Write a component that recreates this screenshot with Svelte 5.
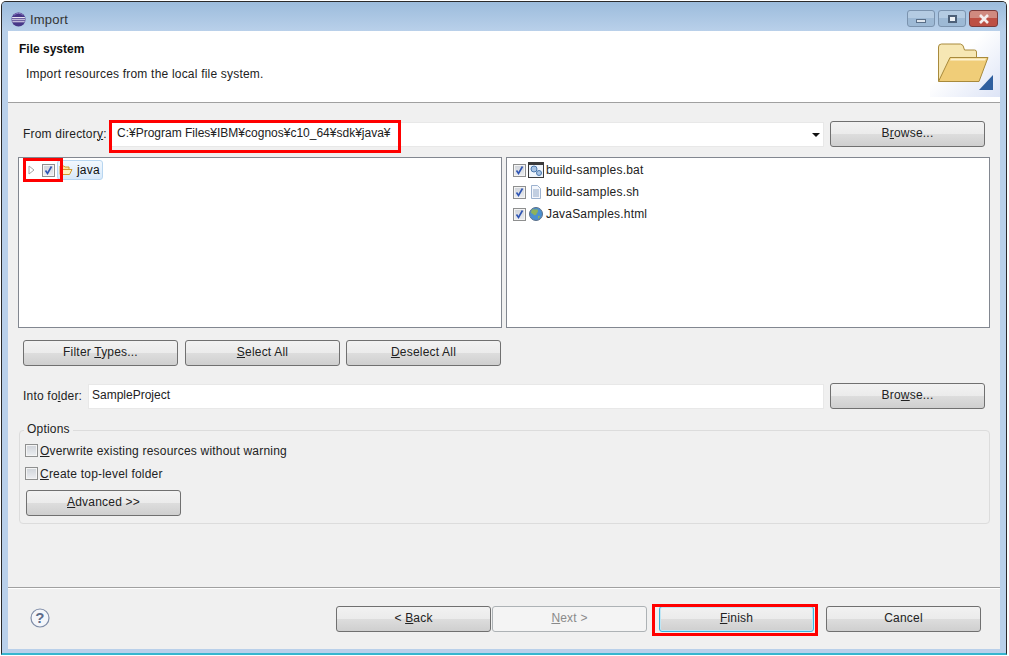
<script>
	const files = [
		{ name: 'build-samples.bat', icon: 'bat' },
		{ name: 'build-samples.sh', icon: 'doc' },
		{ name: 'JavaSamples.html', icon: 'web' }
	];
</script>

<main class="window">
	<div class="titlebar">
		<svg class="eclipse" width="15" height="15" viewBox="0 0 16 16">
			<circle cx="8" cy="8" r="7.5" fill="#473788" />
			<path d="M1.2 6h13.6M0.8 8.2h14.4M1.4 10.4h13.2" stroke="#e8e4f2" stroke-width="1.1" />
			<path d="M3 3.5a7 7 0 0 1 10 0" stroke="#8f7fc4" fill="none" />
		</svg>
		<span class="wintitle">Import</span>
		<div class="controls">
			<div class="ctl"><span class="min"></span></div>
			<div class="ctl"><span class="max"></span></div>
			<div class="ctl close">
				<svg width="14" height="10" viewBox="0 0 14 10">
					<path d="M3 1l8 8M11 1l-8 8" stroke="#f4eeee" stroke-width="2.6" />
				</svg>
			</div>
		</div>
	</div>

	<div class="content">
		<header class="banner">
			<div class="banner-text">
				<h1>File system</h1>
				<p>Import resources from the local file system.</p>
			</div>
			<div class="banner-art">
				<svg width="70" height="66" viewBox="0 0 70 66">
					<path d="M8.5 50V16q0-3 3-3h19q3 0 4 6h10q2 0 2 2v6z" fill="#f6e7b4" stroke="#a88a3c" />
					<path d="M8.5 50.5L20 26.5h38L49 50.5z" fill="#f0cd78" stroke="#a88a3c" />
					<path d="M21 27.5h35l-1 2H20z" fill="#fcf2d0" />
					<path d="M63 44v15H49z" fill="#2f5f9f" />
				</svg>
			</div>
		</header>

		<section class="main">
			<div class="row">
				<label class="lbl" for="dir">From director<u>y</u>:</label>
				<div class="field combo" id="dir">
					<span>C:¥Program Files¥IBM¥cognos¥c10_64¥sdk¥java¥</span>
					<span class="arrow"></span>
					<span class="mark dirmark"></span>
				</div>
				<button class="btn">B<u>r</u>owse...</button>
			</div>

			<div class="panes">
				<div class="pane">
					<div class="treerow">
						<svg class="twisty" width="7" height="10" viewBox="0 0 7 10"><path d="M1 1l5 4-5 4z" fill="#fff" stroke="#a6a6a6" /></svg>
						<span class="check on">
							<svg width="11" height="11" viewBox="0 0 11 11"><path d="M2.5 5.5l2 3 4-7" stroke="#2f55b4" stroke-width="1.6" fill="none" /></svg>
						</span>
						<span class="treeitem">
							<svg width="14" height="12" viewBox="0 0 14 12">
								<path d="M1 10V2h4l1 1h4v2" fill="#fbe3a0" stroke="#d39a2c" />
								<path d="M1 10.5L3.5 5.5h9.5L10.5 10.5z" fill="#fff3c4" stroke="#d39a2c" />
							</svg>
							java
						</span>
						<span class="mark treemark"></span>
					</div>
				</div>
				<div class="pane files">
					{#each files as f}
						<div class="filerow">
							<span class="check on">
								<svg width="11" height="11" viewBox="0 0 11 11"><path d="M2.5 5.5l2 3 4-7" stroke="#2f55b4" stroke-width="1.6" fill="none" /></svg>
							</span>
							{#if f.icon === 'bat'}
								<svg class="ficon" width="16" height="16" viewBox="0 0 16 16">
									<rect x="0.5" y="0.5" width="15" height="15" fill="#eef4fb" stroke="#3a3a3a" />
									<rect x="1" y="1" width="14" height="2" fill="#3a3a3a" />
									<circle cx="6" cy="7" r="3" fill="#a9c4e4" stroke="#4a78ad" />
									<circle cx="11" cy="11" r="2.5" fill="#a9c4e4" stroke="#4a78ad" />
								</svg>
							{:else if f.icon === 'doc'}
								<svg class="ficon" width="16" height="16" viewBox="0 0 16 16">
									<path d="M3.5 1.5h6l3 3v10h-9z" fill="#f4f7fc" stroke="#9db2cf" />
									<path d="M5 6h6M5 8h6M5 10h6M5 12h6" stroke="#8fa6c6" />
								</svg>
							{:else}
								<svg class="ficon" width="16" height="16" viewBox="0 0 16 16">
									<circle cx="8" cy="8" r="6.5" fill="#4b8fd0" stroke="#5a6f88" />
									<path d="M5 3q3 1 4 0 2 2 0 4-1 3-3 2-2-2-3-2 0-3 2-4z" fill="#8db25a" />
									<path d="M10 10q2-1 2 1l-2 2z" fill="#8db25a" />
								</svg>
							{/if}
							<span>{f.name}</span>
						</div>
					{/each}
				</div>
			</div>

			<div class="selbtns">
				<button class="btn">Filter <u>T</u>ypes...</button>
				<button class="btn"><u>S</u>elect All</button>
				<button class="btn"><u>D</u>eselect All</button>
			</div>

			<div class="row into">
				<label class="lbl" for="into">Into fo<u>l</u>der:</label>
				<div class="field" id="into">SampleProject</div>
				<button class="btn">Bro<u>w</u>se...</button>
			</div>

			<div class="options">
				<span class="legend">Options</span>
				<div class="opt"><span class="check"></span><span><u>O</u>verwrite existing resources without warning</span></div>
				<div class="opt"><span class="check"></span><span><u>C</u>reate top-level folder</span></div>
				<button class="btn adv"><u>A</u>dvanced &gt;&gt;</button>
			</div>
		</section>

		<footer class="footer">
			<svg class="help" width="20" height="20" viewBox="0 0 20 20">
				<circle cx="10" cy="10" r="9" fill="#f4f6fa" stroke="#7f8da8" stroke-width="1.2" />
				<text x="10" y="15" text-anchor="middle" class="qm">?</text>
			</svg>
			<div class="navbtns">
				<button class="btn">&lt; <u>B</u>ack</button>
				<button class="btn disabled"><u>N</u>ext &gt;</button>
				<button class="btn default"><u>F</u>inish<span class="mark finmark"></span></button>
				<button class="btn">Cancel</button>
			</div>
		</footer>
	</div>
</main>

<style>
	:global(body) {
		background: #fff;
	}
	* {
		box-sizing: border-box;
	}
	.window {
		width: 1006px;
		height: 654px;
		margin: 1px 0 0 1px;
		background: #b9d0ea;
		border: 1px solid #2a2a2a;
		border-bottom: 2px solid #35b6cf;
		border-radius: 5px 5px 0 0;
		font-family: 'Liberation Sans', Arial, sans-serif;
		font-size: 12px;
		letter-spacing: 0.2px;
		color: #222;
		display: flex;
		flex-direction: column;
	}
	.titlebar {
		height: 29px;
		flex: none;
		display: flex;
		align-items: center;
		padding: 6px 0 0 9px;
		background: linear-gradient(#9cbcdc, #b9d0ea);
		border-radius: 4px 4px 0 0;
	}
	.wintitle {
		margin-left: 4px;
		font-size: 13px;
		color: #333;
	}
	.controls {
		margin-left: auto;
		margin-right: 8px;
		margin-top: -2px;
		display: flex;
		gap: 3px;
	}
	.ctl {
		width: 28px;
		height: 17px;
		border: 1px solid #7b93ae;
		border-radius: 3px;
		background: linear-gradient(#b4cbe2 50%, #9db9d5 50%);
		display: flex;
		align-items: center;
		justify-content: center;
	}
	.ctl.close {
		width: 29px;
		border-color: #7a3a3a;
		background: linear-gradient(#d08a80 50%, #bd4f43 50%);
	}
	.min {
		width: 10px;
		height: 4px;
		margin-top: 5px;
		background: #dfe6ee;
		border: 1px solid #5a6f88;
	}
	.max {
		width: 9px;
		height: 8px;
		background: #eef2f6;
		border: 2px solid #4d6078;
	}
	.content {
		margin: 0 6px;
		height: 618px;
		background: #f0f0f0;
		display: flex;
		flex-direction: column;
	}
	.banner {
		height: 72px;
		flex: none;
		display: flex;
		background: #fff;
		border-bottom: 1px solid #a0a0a0;
	}
	.banner-text {
		padding: 11px 0 0 11px;
	}
	h1 {
		margin: 0;
		font-size: 12px;
		line-height: 15px;
		font-weight: bold;
		letter-spacing: 0;
		color: #111;
	}
	p {
		margin: 10px 0 0 7px;
		line-height: 15px;
	}
	.banner-art {
		margin-left: auto;
		width: 70px;
		height: 66px;
		background: linear-gradient(135deg, #fff 40%, #dde4f6);
	}
	.banner-art svg {
		display: block;
	}
	.main {
		padding-top: 18px;
	}
	.row {
		display: flex;
		align-items: center;
		height: 26px;
		padding: 0 15px;
	}
	.lbl {
		flex: none;
		width: 86px;
		padding-bottom: 1px;
		white-space: nowrap;
	}
	.field {
		position: relative;
		flex: 1;
		height: 25px;
		margin-right: 6px;
		padding: 0 0 2px 7px;
		background: #fff;
		border: 1px solid #e8e8e8;
		display: flex;
		align-items: center;
		letter-spacing: 0;
	}
	.arrow {
		position: absolute;
		right: 3px;
		top: 10px;
		border: 4px solid transparent;
		border-top: 4px solid #111;
	}
	.mark {
		position: absolute;
		border: 3px solid #f00;
		pointer-events: none;
	}
	.dirmark {
		left: -1px;
		top: -3px;
		width: 292px;
		height: 33px;
	}
	.btn {
		position: relative;
		flex: none;
		width: 155px;
		height: 26px;
		padding: 0 0 2px;
		font: inherit;
		letter-spacing: inherit;
		color: #222;
		border: 1px solid #707070;
		border-radius: 3px;
		background: linear-gradient(#f2f2f2, #ebebeb 50%, #dddddd 50%, #cfcfcf);
	}
	.btn.disabled {
		color: #8a8a8a;
		border-color: #adb2b5;
		background: #f4f4f4;
	}
	.btn.default {
		border-color: #3cb4dc;
		box-shadow: inset 0 0 0 1px #bfe6f5;
	}
	.panes {
		display: grid;
		grid-template-columns: 1fr 1fr;
		gap: 4px;
		margin: 10px 10px 0;
		height: 171px;
	}
	.pane {
		background: #fff;
		border: 1px solid #828790;
	}
	.treerow {
		position: relative;
		display: flex;
		align-items: center;
		height: 20px;
		margin-top: 2px;
		padding-left: 9px;
	}
	.twisty {
		margin-right: 7px;
		flex: none;
	}
	.check {
		flex: none;
		width: 13px;
		height: 13px;
		display: inline-flex;
		align-items: center;
		justify-content: center;
		border: 1px solid #8e8f8f;
		background: linear-gradient(#cfd3d9, #eceef1);
		box-shadow: inset 0 0 0 1px #f4f4f4;
	}
	.treeitem {
		display: flex;
		align-items: center;
		gap: 4px;
		height: 20px;
		padding: 0 2px 1px 1px;
		margin-left: 2px;
		border: 1px solid #b8d6f0;
		border-radius: 3px;
		background: linear-gradient(#f2f8fe, #d8e9fa);
		color: #111;
	}
	.treemark {
		left: 4px;
		top: -2px;
		width: 40px;
		height: 24px;
	}
	.files {
		padding: 1px 0 0 6px;
	}
	.filerow {
		display: flex;
		align-items: center;
		height: 22px;
	}
	.ficon {
		flex: none;
		margin: 0 2px 0 2px;
	}
	.filerow span:last-child {
		padding-bottom: 1px;
	}
	.selbtns {
		display: flex;
		gap: 6px;
		margin: 12px 0 0 15px;
	}
	.selbtns .btn:nth-child(2) {
		margin-left: 1px;
	}
	.into {
		margin-top: 17px;
	}
	.into .lbl {
		width: 65px;
	}
	.into .field {
		padding-left: 3px;
	}
	.options {
		position: relative;
		margin: 21px 10px 0 11px;
		padding: 8px 7px 0 5px;
		height: 94px;
		border: 1px solid #dcdcdc;
		border-radius: 4px;
	}
	.legend {
		position: absolute;
		left: 4px;
		top: -9px;
		padding: 0 3px 0 3px;
		line-height: 15px;
		background: #f0f0f0;
	}
	.opt {
		display: flex;
		align-items: center;
		gap: 2px;
		height: 23px;
	}
	.adv {
		margin: 5px 0 0 1px;
	}
	.footer {
		margin-top: auto;
		height: 62px;
		flex: none;
		display: flex;
		align-items: flex-start;
		border-top: 1px solid #a0a0a0;
		box-shadow: inset 0 1px 0 #fff;
		padding: 18px 19px 0 22px;
	}
	.help {
		margin-top: 2px;
	}
	.qm {
		font-size: 15px;
		font-weight: bold;
		fill: #5d6b8a;
		font-family: 'Liberation Sans', Arial, sans-serif;
	}
	.navbtns {
		margin-left: auto;
		display: flex;
	}
	.navbtns .btn:nth-child(2) {
		margin-left: 1px;
	}
	.navbtns .btn:nth-child(3) {
		margin-left: 12px;
	}
	.navbtns .btn:nth-child(4) {
		margin-left: 12px;
	}
	.finmark {
		left: -8px;
		top: -3px;
		width: 166px;
		height: 32px;
	}
</style>
